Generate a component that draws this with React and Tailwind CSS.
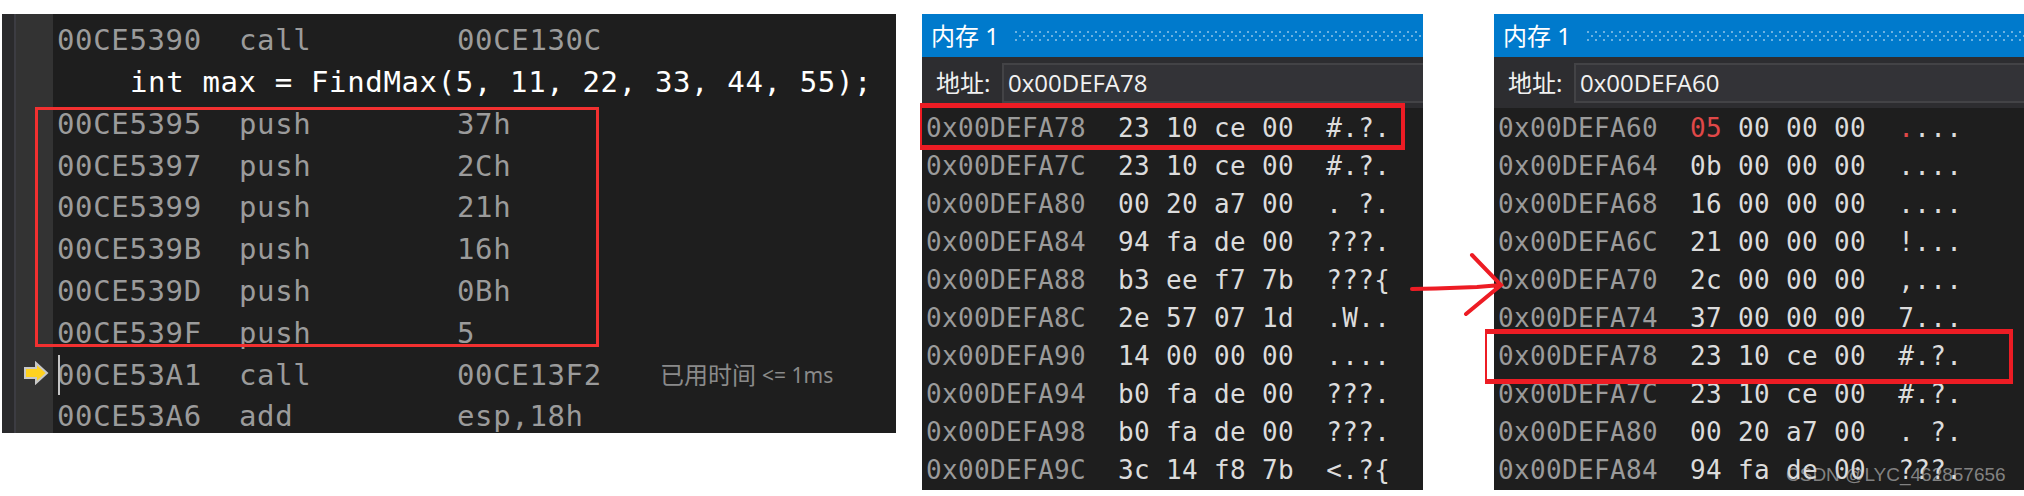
const codeRows = [
  { addr: "00CE5390", op: "call", arg: "00CE130C" },
  { source: "int max = FindMax(5, 11, 22, 33, 44, 55);" },
  { addr: "00CE5395", op: "push", arg: "37h" },
  { addr: "00CE5397", op: "push", arg: "2Ch" },
  { addr: "00CE5399", op: "push", arg: "21h" },
  { addr: "00CE539B", op: "push", arg: "16h" },
  { addr: "00CE539D", op: "push", arg: "0Bh" },
  { addr: "00CE539F", op: "push", arg: "5" },
  { addr: "00CE53A1", op: "call", arg: "00CE13F2", elapsed: true },
  { addr: "00CE53A6", op: "add", arg: "esp,18h" },
];

const leftMemory = [
  ["0x00DEFA78", "23 10 ce 00", "#.?."],
  ["0x00DEFA7C", "23 10 ce 00", "#.?."],
  ["0x00DEFA80", "00 20 a7 00", ". ?."],
  ["0x00DEFA84", "94 fa de 00", "???."],
  ["0x00DEFA88", "b3 ee f7 7b", "???{"],
  ["0x00DEFA8C", "2e 57 07 1d", ".W.."],
  ["0x00DEFA90", "14 00 00 00", "...."],
  ["0x00DEFA94", "b0 fa de 00", "???."],
  ["0x00DEFA98", "b0 fa de 00", "???."],
  ["0x00DEFA9C", "3c 14 f8 7b", "<.?{"],
];

const rightMemory = [
  ["0x00DEFA60", "05 00 00 00", "....", true],
  ["0x00DEFA64", "0b 00 00 00", "...."],
  ["0x00DEFA68", "16 00 00 00", "...."],
  ["0x00DEFA6C", "21 00 00 00", "!..."],
  ["0x00DEFA70", "2c 00 00 00", ",..."],
  ["0x00DEFA74", "37 00 00 00", "7..."],
  ["0x00DEFA78", "23 10 ce 00", "#.?."],
  ["0x00DEFA7C", "23 10 ce 00", "#.?."],
  ["0x00DEFA80", "00 20 a7 00", ". ?."],
  ["0x00DEFA84", "94 fa de 00", "???."],
];

function CurrentLineArrow() {
  return (
    <svg width="26" height="24" viewBox="0 0 26 24" className="absolute left-[21px] top-[347px]">
      <path
        d="M2 7h11V2l11 10-11 10v-5H2z"
        fill="#ffd21f"
        stroke="#c8c8c8"
        strokeWidth="2"
      />
    </svg>
  );
}

function Disassembly() {
  return (
    <div className="relative ml-[2px] flex h-[419px] w-[894px] bg-[#1e1e1e] overflow-hidden">
      <div className="w-[12px] bg-[#2a2a2c]" />
      <div className="w-[2px] bg-[#3c3c42]" />
      <div className="w-[37px] bg-[#333333]" />
      <div className="flex-1 pt-[6px] pl-[4px] font-['DejaVu_Sans_Mono',monospace] text-[29px] tracking-[0.64px] text-[#9b9b9b] whitespace-pre">
        {codeRows.map((row, i) =>
          row.source ? (
            <div key={i} className="flex h-[41.8px] items-center pl-[73px] text-white">
              {row.source}
            </div>
          ) : (
            <div key={i} className="flex h-[41.8px] items-center">
              <span className="w-[182px]">{row.addr}</span>
              <span className="w-[218px]">{row.op}</span>
              <span className="w-[203px]">{row.arg}</span>
              {row.elapsed && (
                <span className="flex items-center gap-[6px] font-['Noto_Sans','Noto_Sans_CJK_SC',sans-serif] tracking-normal text-[#8a8a8a]">
                  <span className="text-[24px]">已用时间</span>
                  <span className="text-[21px]">{"<= 1ms"}</span>
                </span>
              )}
            </div>
          ),
        )}
      </div>
      <div className="absolute left-[33px] top-[93px] h-[240px] w-[564px] border-[3px] border-[#f23030]" />
      <CurrentLineArrow />
      <div className="absolute left-[56px] top-[341px] h-[40px] w-[2px] bg-[#c4c4c4]" />
    </div>
  );
}

function MemoryPanel({ address, rows, className }) {
  return (
    <div className={`flex h-[476px] flex-col overflow-hidden bg-[#1e1e1e] ${className}`}>
      <div className="flex h-[43px] shrink-0 items-center bg-[#007acc] pl-[9px] font-['Noto_Sans','Noto_Sans_CJK_SC',sans-serif] text-[24px] text-white">
        <span className="w-[84px] shrink-0">内存 1</span>
        <div className="h-[10px] flex-1 bg-[radial-gradient(circle,#6cb2e2_1.2px,transparent_1.4px),radial-gradient(circle,#6cb2e2_1.2px,transparent_1.4px)] bg-[length:8px_8px] bg-[position:-3px_-3px,1px_1px]" />
      </div>
      <div className="flex h-[51px] shrink-0 items-center bg-[#2d2d30] pl-[14px]">
        <span className="w-[66px] shrink-0 font-['Noto_Sans','Noto_Sans_CJK_SC',sans-serif] text-[24px] text-[#f1f1f1]">
          地址:
        </span>
        <div className="flex h-[40px] flex-1 items-center border-2 border-r-0 border-[#434346] bg-[#333337] pl-[4px] font-['Open_Sans',sans-serif] text-[24px] text-[#f1f1f1]">
          {address}
        </div>
      </div>
      <div className="pl-[4px] pt-[1px] font-['DejaVu_Sans_Mono',monospace] text-[26px] tracking-[0.35px] text-[#dcdcdc] whitespace-pre">
        {rows.map(([addr, bytes, ascii, changed]) => (
          <div key={addr} className="flex h-[38px] items-center">
            <span className="text-[#9b9b9b]">{addr}</span>
            <span>{"  "}</span>
            {changed ? (
              <>
                <span className="text-[#e04848]">{bytes.slice(0, 2)}</span>
                <span>{bytes.slice(2)}</span>
                <span>{"  "}</span>
                <span className="text-[#e04848]">{ascii[0]}</span>
                <span>{ascii.slice(1)}</span>
              </>
            ) : (
              <>
                <span>{bytes}</span>
                <span>{"  "}</span>
                <span>{ascii}</span>
              </>
            )}
          </div>
        ))}
      </div>
    </div>
  );
}

export default function App() {
  return (
    <div className="relative flex h-[496px] w-[2024px] items-start overflow-hidden bg-white pt-[14px]">
      <Disassembly />
      <MemoryPanel address="0x00DEFA78" rows={leftMemory} className="ml-[26px] w-[501px]" />
      <MemoryPanel address="0x00DEFA60" rows={rightMemory} className="ml-[71px] flex-1" />

      {/* hand drawn annotations on top of the screenshots */}
      <div className="absolute left-[920px] top-[103px] h-[47px] w-[485px] border-[5px] border-l-2 border-r-4 border-[#ed1c24]" />
      <div className="absolute left-[1485px] top-[329px] h-[55px] w-[528px] border-[5px] border-l-2 border-r-4 border-[#ed1c24]" />
      <svg width="100" height="70" viewBox="1410 250 100 70" className="absolute left-[1410px] top-[250px]">
        <path
          d="M1412 289L1436 288.500L1477 287L1501 285M1472 255L1501 285L1466 314"
          fill="none"
          stroke="#ed1c24"
          strokeWidth="4"
          strokeLinecap="round"
        />
      </svg>
      <div className="absolute left-[1786px] top-[464px] whitespace-nowrap font-['Liberation_Sans',sans-serif] text-[19px] leading-[22px] text-[#c8c8c8]/60">
        CSDN @LYC_462857656
      </div>
    </div>
  );
}
